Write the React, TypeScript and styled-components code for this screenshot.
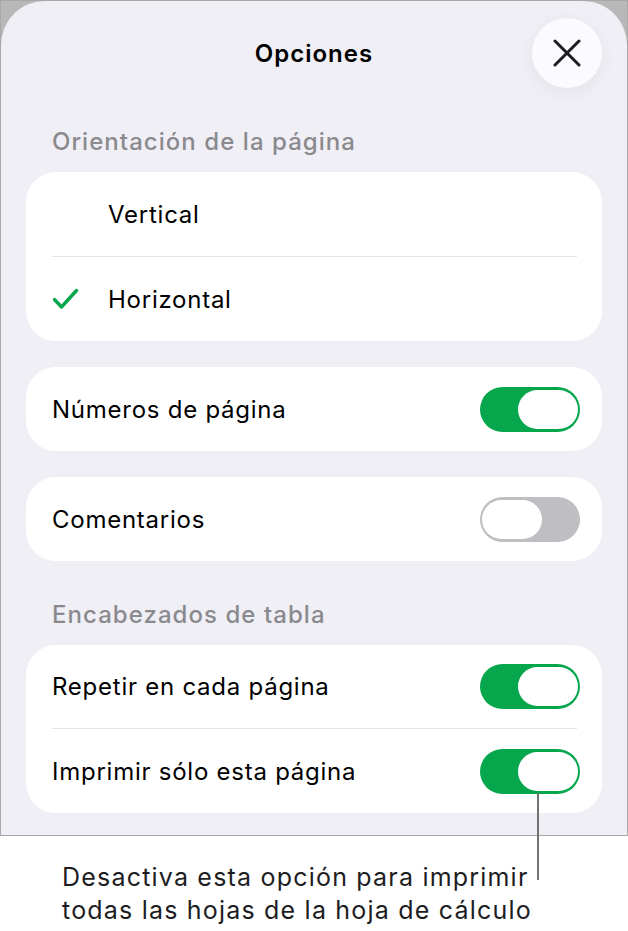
import React from "react";
import styled, { createGlobalStyle } from "styled-components";

const Global = createGlobalStyle`
  html, body { margin: 0; padding: 0; background: #ffffff; }
  body { font-family: Inter, "Noto Sans", "DejaVu Sans", sans-serif; -webkit-font-smoothing: antialiased; }
`;

const Page = styled.div`
  width: 628px;
  position: relative;
`;

const Frame = styled.div`
  box-sizing: border-box;
  width: 628px;
  height: 836px;
  border: 1px solid #a8a8a8;
  background: #b8b8b8;
`;

const Sheet = styled.div`
  box-sizing: border-box;
  height: 100%;
  background: #f0eff5;
  border-radius: 44px 44px 0 0;
  padding: 17px 25px 0 25px;
  display: flex;
  flex-direction: column;
`;

const Header = styled.div`
  position: relative;
  height: 70px;
  display: flex;
  align-items: center;
  justify-content: center;
`;

const Title = styled.h1`
  margin: 0;
  font-size: 24px;
  font-weight: 600;
  color: #000;
  letter-spacing: 1px;
`;

const CloseButton = styled.button`
  position: absolute;
  right: 0;
  top: 0;
  width: 70px;
  height: 70px;
  border-radius: 50%;
  border: none;
  padding: 0;
  background: #fbfbfe;
  box-shadow: 0 4px 18px rgba(0, 0, 0, 0.06);
  display: flex;
  align-items: center;
  justify-content: center;
`;

const SectionLabel = styled.div<{ $top: number }>`
  font-size: 24px;
  font-weight: 500;
  color: #8a8a8e;
  letter-spacing: 1.05px;
  padding-left: 26px;
  line-height: 28px;
  margin-top: ${(p) => p.$top}px;
  margin-bottom: 16px;
`;

const Card = styled.div<{ $top?: number }>`
  background: #ffffff;
  border-radius: 30px;
  margin-top: ${(p) => p.$top ?? 0}px;
  display: flex;
  flex-direction: column;
`;

const Row = styled.div<{ $h: number }>`
  height: ${(p) => p.$h}px;
  display: flex;
  align-items: center;
  padding: 0 22px 0 26px;
  font-size: 24px;
  letter-spacing: 0.75px;
  color: #000;
`;

const Separator = styled.div`
  height: 1px;
  background: #e3e3e8;
  margin: 0 25px 0 26px;
`;

const CheckSlot = styled.span`
  width: 56px;
  display: inline-flex;
  align-items: center;
`;

const Label = styled.span`
  flex: 1;
`;

const Track = styled.span<{ $on: boolean }>`
  position: relative;
  width: 100px;
  height: 45px;
  border-radius: 23px;
  background: ${(p) => (p.$on ? "#06a64d" : "#bebec3")};
  flex: none;
`;

const Knob = styled.span<{ $on: boolean }>`
  position: absolute;
  top: 3px;
  ${(p) => (p.$on ? "right: 2px;" : "left: 2px;")}
  width: 60px;
  height: 39px;
  border-radius: 20px;
  background: #ffffff;
`;

const Toggle = ({ on }: { on: boolean }) => (
  <Track $on={on}>
    <Knob $on={on} />
  </Track>
);

const Caption = styled.p`
  margin: 0;
  padding: 25px 0 0 62px;
  font-size: 25px;
  line-height: 33px;
  letter-spacing: 1.2px;
  color: #1d1d1f;
  white-space: nowrap;
`;

const Leader = styled.div`
  position: absolute;
  left: 537px;
  top: 793px;
  width: 2px;
  height: 87px;
  background: #727272;
`;

const Check = () => (
  <svg width="27" height="22" viewBox="0 0 27 22" fill="none">
    <path
      d="M2.5 11.5 L9.5 19 L24.5 2.5"
      stroke="#06a64d"
      strokeWidth="3.4"
      strokeLinecap="round"
      strokeLinejoin="round"
    />
  </svg>
);

const CloseIcon = () => (
  <svg width="28" height="28" viewBox="0 0 28 28" fill="none">
    <path
      d="M2 2 L26 26 M26 2 L2 26"
      stroke="#1c1c1e"
      strokeWidth="3"
      strokeLinecap="round"
    />
  </svg>
);

export default function App() {
  return (
    <Page>
      <Global />
      <Frame>
        <Sheet>
          <Header>
            <Title>Opciones</Title>
            <CloseButton aria-label="Cerrar">
              <CloseIcon />
            </CloseButton>
          </Header>

          <SectionLabel $top={40}>Orientación de la página</SectionLabel>
          <Card>
            <Row $h={84}>
              <CheckSlot />
              <Label>Vertical</Label>
            </Row>
            <Separator />
            <Row $h={84}>
              <CheckSlot>
                <Check />
              </CheckSlot>
              <Label>Horizontal</Label>
            </Row>
          </Card>

          <Card $top={26}>
            <Row $h={84}>
              <Label>Números de página</Label>
              <Toggle on />
            </Row>
          </Card>

          <Card $top={26}>
            <Row $h={84}>
              <Label>Comentarios</Label>
              <Toggle on={false} />
            </Row>
          </Card>

          <SectionLabel $top={40}>Encabezados de tabla</SectionLabel>
          <Card>
            <Row $h={83}>
              <Label>Repetir en cada página</Label>
              <Toggle on />
            </Row>
            <Separator />
            <Row $h={84}>
              <Label>Imprimir sólo esta página</Label>
              <Toggle on />
            </Row>
          </Card>
        </Sheet>
      </Frame>
      <Leader />
      <Caption>
        Desactiva esta opción para imprimir
        <br />
        todas las hojas de la hoja de cálculo
      </Caption>
    </Page>
  );
}
